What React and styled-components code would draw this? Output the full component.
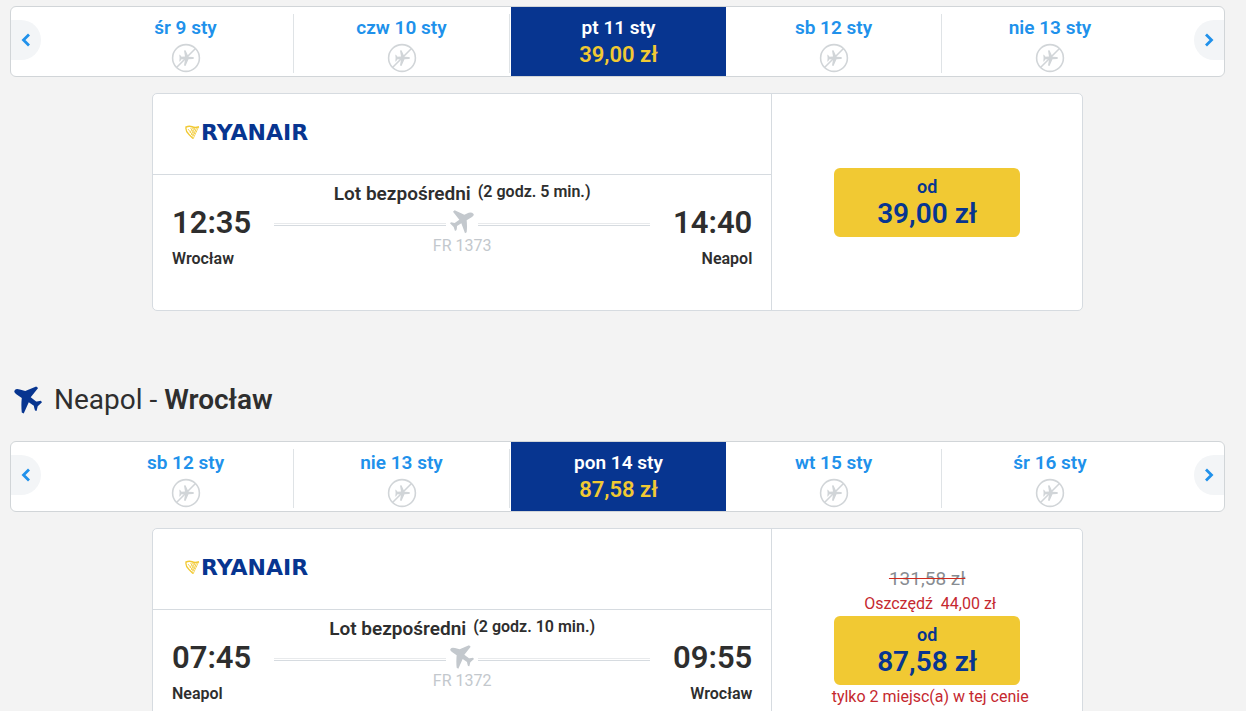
import React from "react";
import styled, { createGlobalStyle } from "styled-components";

const outbound = {
  days: [
    { label: "śr 9 sty" },
    { label: "czw 10 sty" },
    { label: "pt 11 sty", price: "39,00 zł" },
    { label: "sb 12 sty" },
    { label: "nie 13 sty" },
  ],
  flight: {
    departure: "12:35",
    from: "Wrocław",
    arrival: "14:40",
    to: "Neapol",
    duration: "(2 godz. 5 min.)",
    number: "FR 1373",
    price: "39,00 zł",
  },
};

const inbound = {
  days: [
    { label: "sb 12 sty" },
    { label: "nie 13 sty" },
    { label: "pon 14 sty", price: "87,58 zł" },
    { label: "wt 15 sty" },
    { label: "śr 16 sty" },
  ],
  flight: {
    departure: "07:45",
    from: "Neapol",
    arrival: "09:55",
    to: "Wrocław",
    duration: "(2 godz. 10 min.)",
    number: "FR 1372",
    price: "87,58 zł",
    oldPrice: "131,58 zł",
    saving: "44,00 zł",
    seatsLeft: "tylko 2 miejsc(a) w tej cenie",
    back: true,
  },
};

// The plane on the track heads up and to the right
const outboundPlane =
  "M70 11Q74 16 66 21L50 31Q52 50 50 67L45 70L34 40L21 48Q21 57 19 61L15 63L11 51L0 40L3 37L10 38L14 39L28 29L9 5L14 1L43 14L56 8Q66 6 70 11Z";

// and on the way back up and to the left
const inboundPlane =
  "M2 11Q-2 16 6 21L20 31Q18 50 20 68L25 71L38 42L51 51Q52 58 54 63L58 64L61 52L72 42L69 38L59 40L57 40L43 29L62 5L57 1L29 13L15 9Q5 6 2 11Z";

const Plane = ({ size, back }) => (
  <svg width={size} height={size} viewBox="0 0 72 72" fill="currentColor" aria-hidden="true">
    <path d={back ? inboundPlane : outboundPlane} />
  </svg>
);

const NoFlight = () => (
  <svg width="30" height="30" viewBox="0 0 30 30" role="img" aria-label="Brak lotów">
    <g fill="none" stroke="#d1d5d8" strokeWidth="1.6">
      <circle cx="15" cy="15" r="13.4" />
      <path d="M5.5 24.5L24.5 5.5" />
    </g>
    <path
      fill="#d1d5d8"
      d="M22 14Q24 15 22 16L17.500 16.300L14.500 23L13 22.500L14 16.500L10.500 16.200L9 18.500H8.300L8.600 15L8.300 11.800H9L10.500 13.800L14 13.600L13 7.500L14.500 7.200L17.500 13.700Z"
    />
  </svg>
);

const Harp = () => (
  <svg width="15" height="15" viewBox="0 0 15 15" fill="none" stroke="#f1c933" aria-hidden="true">
    <path strokeWidth="1.5" d="M1 2.200Q4 .6 7 1.800T14 1.800" />
    <path strokeWidth="1.300" d="M1.200 1.500Q0 6 4 9.500L8 13.500" />
    <path strokeWidth=".8" d="M13.500 2L8 14M11.500 3L7.500 11.500M9.500 3L6.300 10M7.500 3L5 8M3 4L8.500 11M5.500 3L9.800 9M8.500 3L11.500 7" />
  </svg>
);

const Chevron = ({ next }) => (
  <svg width="10" height="14" viewBox="0 0 10 14" fill="none" stroke="currentColor" strokeWidth="2.8" aria-hidden="true">
    <path d={next ? "M2 1.500L7.500 7L2 12.500" : "M8 1.500L2.500 7L8 12.500"} />
  </svg>
);

const DateBar = ({ days }) => (
  <Bar>
    <Arrow aria-label="Poprzednie dni">
      <Chevron />
    </Arrow>
    <Days>
      {days.map((day) => (
        <Day key={day.label} $active={!!day.price}>
          <DayButton $active={!!day.price}>
            <span>{day.label}</span>
            {day.price ? <DayPrice>{day.price}</DayPrice> : <NoFlight />}
          </DayButton>
        </Day>
      ))}
    </Days>
    <Arrow $next aria-label="Następne dni">
      <Chevron next />
    </Arrow>
  </Bar>
);

const FlightCard = ({ flight }) => (
  <Card>
    <Details>
      <Carrier>
        <Harp />
        <span>RYANAIR</span>
      </Carrier>
      <Route>
        <Stop>
          <Time>{flight.departure}</Time>
          <City>{flight.from}</City>
        </Stop>
        <Middle>
          <Summary>
            <strong>Lot bezpośredni</strong>
            <Duration>{flight.duration}</Duration>
          </Summary>
          <Track>
            <Line />
            <Plane size={24} back={flight.back} />
            <Line />
          </Track>
          <FlightNumber>{flight.number}</FlightNumber>
        </Middle>
        <Stop $end>
          <Time>{flight.arrival}</Time>
          <City>{flight.to}</City>
        </Stop>
      </Route>
    </Details>
    <PriceBox>
      {flight.oldPrice && (
        <>
          <OldPrice>{flight.oldPrice}</OldPrice>
          <Note>Oszczędź &nbsp;{flight.saving}</Note>
        </>
      )}
      <BuyButton>
        <span>od</span>
        <strong>{flight.price}</strong>
      </BuyButton>
      {flight.seatsLeft && <Note>{flight.seatsLeft}</Note>}
    </PriceBox>
  </Card>
);

const App = () => {
  return (
    <Page>
      <GlobalStyle />
      <section>
        <DateBar days={outbound.days} />
        <FlightCard flight={outbound.flight} />
      </section>
      <section>
        <Title>
          <Plane size={28} back />
          <span>
            Neapol - <strong>Wrocław</strong>
          </span>
        </Title>
        <DateBar days={inbound.days} />
        <FlightCard flight={inbound.flight} />
      </section>
    </Page>
  );
};

export default App;

const GlobalStyle = createGlobalStyle`
  * {
    box-sizing: border-box;
  }
  body {
    margin: 0;
    background-color: #f3f3f3;
    color: #2e2e2e;
    font-family: Roboto, "Liberation Sans", sans-serif;
  }
  button {
    border: 0;
    padding: 0;
    font-family: inherit;
    cursor: pointer;
  }
  strong {
    font-weight: 600;
  }
  svg {
    flex-shrink: 0;
  }
`;

const Page = styled.main`
  padding: 6px 21px 0 10px;
`;

const Bar = styled.div`
  display: flex;
  align-items: center;
  justify-content: space-between;
  height: 71px;
  border: 1px solid #d1d5d8;
  border-radius: 6px;
  background-color: #fff;
  overflow: hidden;
`;

const Arrow = styled.button`
  display: flex;
  align-items: center;
  justify-content: center;
  width: 30px;
  height: 40px;
  margin-bottom: 3px;
  border-radius: ${({ $next }) => ($next ? "20px 0 0 20px" : "0 20px 20px 0")};
  background-color: #f3f5f7;
  color: #2091eb;
`;

const Days = styled.ul`
  display: grid;
  grid-template-columns: repeat(5, 1fr);
  flex: 1;
  align-self: stretch;
  margin: 0 36px 0 37px;
  padding: 0;
  list-style: none;
`;

const Day = styled.li`
  display: flex;
  margin: ${({ $active }) => ($active ? "0 0 0 1px" : "7px 0 5px")};
  border-right: ${({ $active }) => ($active ? "0" : "1px solid #dfe3e6")};
  &:last-child {
    border-right: 0;
  }
`;

const DayButton = styled.button`
  display: flex;
  flex: 1;
  flex-direction: column;
  align-items: center;
  padding-top: ${({ $active }) => ($active ? "9px" : "2px")};
  background-color: ${({ $active }) => ($active ? "#073590" : "transparent")};
  color: ${({ $active }) => ($active ? "#fff" : "#2091eb")};
  font-size: 19px;
  font-weight: 600;
  line-height: 24px;
  svg {
    margin-top: 3px;
  }
`;

const DayPrice = styled.strong`
  color: #f1c933;
  font-size: 22px;
  line-height: 30px;
`;

const Card = styled.article`
  display: grid;
  grid-template-columns: 2fr 1fr;
  height: 218px;
  margin: 16px 142px 0;
  border: 1px solid #d6dbe0;
  border-radius: 5px;
  background-color: #fff;
`;

const Details = styled.div`
  border-right: 1px solid #d6dbe0;
`;

const Carrier = styled.div`
  display: flex;
  align-items: center;
  gap: 1px;
  height: 81px;
  padding: 0 32px 3px;
  border-bottom: 1px solid #d6dbe0;
  color: #073590;
  font-family: "DejaVu Sans", sans-serif;
  font-size: 22px;
  font-weight: 700;
`;

const Route = styled.div`
  display: flex;
  padding: 6px 19px 0;
`;

const Stop = styled.div`
  width: 80px;
  padding-top: 22px;
  text-align: ${({ $end }) => ($end ? "right" : "left")};
`;

const Time = styled.div`
  font-size: 31px;
  font-weight: 600;
  line-height: 40px;
`;

const City = styled.div`
  font-size: 16px;
  font-weight: 600;
  line-height: 32px;
`;

const Middle = styled.div`
  display: flex;
  flex: 1;
  flex-direction: column;
  align-items: center;
  padding: 0 22px;
`;

const Summary = styled.div`
  display: flex;
  gap: 7px;
  font-size: 19px;
  line-height: 26px;
`;

const Duration = styled.span`
  font-size: 16px;
  font-weight: 600;
  line-height: 22px;
`;

const Track = styled.div`
  display: flex;
  align-items: center;
  gap: 4px;
  width: 100%;
  height: 30px;
  color: #c3c8cd;
`;

const Line = styled.div`
  flex: 1;
  height: 3px;
  margin-top: 4px;
  border: solid #d6dbe0;
  border-width: 1px 0;
  border-top-color: #e8eaec;
`;

const FlightNumber = styled.div`
  color: #c3c8cd;
  font-size: 16px;
  line-height: 18px;
`;

const PriceBox = styled.div`
  display: flex;
  flex-direction: column;
  align-items: center;
  justify-content: center;
`;

const OldPrice = styled.del`
  color: #878c91;
  font-size: 19px;
  line-height: 26px;
  text-decoration: line-through #d02a1e;
`;

const Note = styled.div`
  padding-left: 6px;
  color: #c5282f;
  font-size: 16px;
  line-height: 24px;
`;

const BuyButton = styled.button`
  display: flex;
  flex-direction: column;
  align-items: center;
  width: 60%;
  height: 69px;
  padding-top: 7px;
  border-radius: 6px;
  background-color: #f1c933;
  color: #073590;
  font-size: 18px;
  font-weight: 600;
  line-height: 24px;
  strong {
    font-size: 28px;
    line-height: 30px;
  }
`;

const Title = styled.h2`
  display: flex;
  align-items: center;
  gap: 12px;
  margin: 68px 0 20px;
  padding-left: 4px;
  font-size: 28px;
  font-weight: 400;
  line-height: 42px;
  svg {
    color: #073590;
  }
`;
